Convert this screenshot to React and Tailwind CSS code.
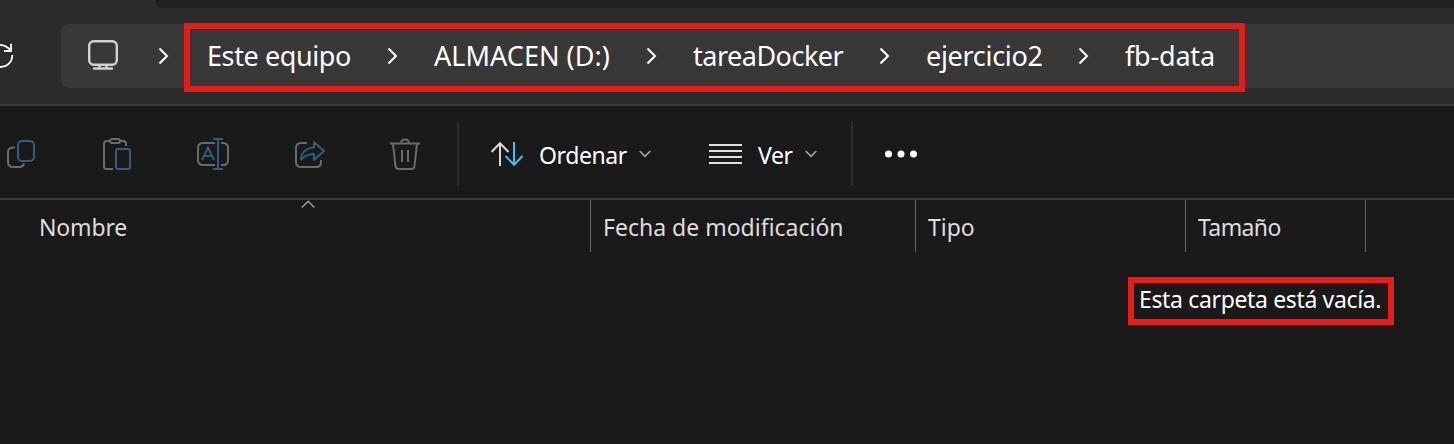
import React from "react";

const Svg = ({ w = 32, h = 32, className = "", sw = 2, stroke = "#6b6b6b", children }) => (
  <svg
    width={w}
    height={h}
    viewBox={`0 0 ${w} ${h}`}
    fill="none"
    stroke={stroke}
    strokeWidth={sw}
    className={`block shrink-0 ${className}`}
  >
    {children}
  </svg>
);

const BLUE = "#2f5f7d";

const Refresh = () => (
  <Svg w={14} h={28} stroke="#fff" sw={1.8} className="mt-[34px]">
    <path d="M0 2.800C4.500 3 8 5 10.800 8.600M11 1.800V9H4M12.200 13c.3 6.500-4.500 12-12.200 12" />
  </Svg>
);

const Monitor = () => (
  <Svg w={30} h={30} stroke="#d2d2d2" className="ml-[27px] mt-4">
    <rect x="1.200" y="1.200" width="27.600" height="23.600" rx="4.500" strokeWidth="2.400" />
    <path d="M6 28.500h18M11.500 25v3M18.500 25v3" strokeWidth="2.400" strokeLinecap="round" />
  </Svg>
);

const Chevron = () => (
  <Svg w={10} h={16} stroke="#fff" className="mt-6">
    <path d="M.5 .5 8 8 .5 15.500" />
  </Svg>
);

const Caret = () => (
  <Svg w={12} h={8} stroke="#a3a3a3" sw={1.7}>
    <path d="M.7 1 6 6.300 11.300 1" />
  </Svg>
);

const Copy = () => (
  <Svg>
    <path d="M10 9.500H8c-3 0-5 2-5 5V24c0 3 2 5 5 5h6c2.500 0 4.500-1.200 5-3.500" />
    <rect x="13" y="3" width="16" height="20" rx="4" stroke={BLUE} />
  </Svg>
);

const Paste = () => (
  <Svg>
    <path d="M8 3H5.500C4.400 3 3 4 3 5.500V28.500C3 30 4 31 5.500 31H12M20 3h2c1.500 0 3 1 3 2.500V8" />
    <rect x="9" y="1" width="10" height="4" rx="2" />
    <rect x="15" y="11" width="14" height="20" rx="2" stroke={BLUE} />
  </Svg>
);

const Rename = () => (
  <Svg>
    <path d="M18 5H6C3 5 1 7 1 10v12c0 3 2 5 5 5h12M24 5h2c3 0 5 2 5 5v12c0 3-2 5-5 5h-2" />
    <path d="M16 1h10M16 31h10M21 1v30M5 22 11 9.500 17 22M7 18h8" stroke={BLUE} />
  </Svg>
);

const Share = () => (
  <Svg>
    <path d="M14 5H8C5 5 3 7 3 10v14c0 3 2 5 5 5h15c3 0 5-2 5-5v-2" />
    <path
      d="M21 4v5.500C13 10 8 15 8 21.500c4-4 8-5.500 13-5.500v6l10-9z"
      stroke={BLUE}
      strokeLinejoin="round"
      strokeWidth="1.9"
    />
  </Svg>
);

const Trash = () => (
  <Svg>
    <path d="M1 5.500h30M12 5.500C12 2.800 13.500 1.500 16 1.500s4 1.300 4 4M4 6l2.500 22c.2 2 1.200 3 3 3h13c1.800 0 2.800-1 3-3L28 6M13 12v12M19 12v12" />
  </Svg>
);

const Sort = () => (
  <Svg stroke="#d8d8d8">
    <path d="M.5 14 9 5.200l8.500 8.800M9 5v23" />
    <path d="M23 4v23M14.500 18 23 26.800l8.500-8.800" stroke="#4cb8f5" />
  </Svg>
);

const List = () => (
  <Svg w={33} stroke="#e0e0e0">
    <path d="M0 7h33M0 13h33M0 19h33M0 25h33" />
  </Svg>
);

const crumbs = [
  { text: "Este equipo", style: "ml-[38px] w-[181px] tracking-[-0.4px]" },
  { text: "ALMACEN (D:)", style: "ml-9 w-[213px] tracking-[0.05px]" },
  { text: "tareaDocker", style: "ml-9 w-[187px] tracking-[-0.5px]" },
  { text: "ejercicio2", style: "ml-9 w-[153px] tracking-[-0.3px]" },
  { text: "fb-data", style: "ml-9 tracking-[-0.2px]" },
];

const columns = [
  { text: "Nombre", style: "w-[591px] pl-[39px] tracking-[-0.15px]" },
  { text: "Fecha de modificación", style: "w-[325px] pl-3" },
  { text: "Tipo", style: "w-[270px] pl-3" },
  { text: "Tamaño", style: "w-[180px] pl-3 tracking-[-0.6px]" },
];

export default function App() {
  return (
    <div className="relative flex h-[444px] w-[1454px] flex-col overflow-hidden bg-[#1a1a1a] font-['Noto_Sans',sans-serif] text-white">
      <header className="h-[106px] shrink-0 border-b-2 border-[#3c3c3c] bg-[#2c2c2c]">
        <div className="ml-[155px] h-2 rounded-bl-lg bg-[#202020]" />
        <div className="flex">
          <div className="w-[61px]">
            <Refresh />
          </div>
          <nav className="mt-4 flex h-16 flex-1 rounded-l-lg bg-[#383838]">
            <Monitor />
            <div className="w-[41px]" />
            <Chevron />
            {crumbs.map((c, i) => (
              <React.Fragment key={c.text}>
                <span className={`shrink-0 whitespace-nowrap text-[27px] leading-[64px] ${c.style}`}>{c.text}</span>
                {i < crumbs.length - 1 && <Chevron />}
              </React.Fragment>
            ))}
          </nav>
        </div>
      </header>

      <div className="flex h-[94px] shrink-0 items-center border-b-2 border-[#3c3c3c] pl-[5px] pt-1">
        <div className="flex gap-16">
          <Copy />
          <Paste />
          <Rename />
          <Share />
          <Trash />
        </div>
        <div className="ml-9 h-16 w-0.5 bg-[#2d2d2d]" />
        <button className="ml-8 flex items-center">
          <Sort />
          <span className="ml-4 w-[100px] pt-0.5 text-left text-[23px] tracking-[-0.4px]">Ordenar</span>
          <Caret />
        </button>
        <button className="ml-[58px] flex items-center">
          <List />
          <span className="ml-4 w-[47px] pt-0.5 text-left text-[23px] tracking-[-0.4px]">Ver</span>
          <Caret />
        </button>
        <div className="ml-[34px] h-16 w-0.5 bg-[#2d2d2d]" />
        <Svg w={34} className="ml-8">
          <g fill="#fff" stroke="none">
            <circle cx="3.500" cy="16" r="3.500" />
            <circle cx="16" cy="16" r="3.500" />
            <circle cx="28.500" cy="16" r="3.500" />
          </g>
        </Svg>
      </div>

      <div className="relative flex h-[52px] shrink-0">
        {columns.map((c) => (
          <div
            key={c.text}
            className={`shrink-0 whitespace-nowrap border-r border-[#656565] text-[23px] leading-[54px] text-[#dedede] ${c.style}`}
          >
            {c.text}
          </div>
        ))}
        <Svg w={14} h={8} stroke="#b0b0b0" sw={1.2} className="absolute left-[301px] top-0">
          <path d="M.8 7.500 7.200 1.300 13.400 7.500" />
        </Svg>
      </div>

      <main className="flex flex-1 justify-end pr-[60px] pt-[25px]">
        <div className="h-12 w-[266px] whitespace-nowrap border-[6px] border-[#e81b1b] pl-[5px] text-[23px] leading-[33px] tracking-[-0.35px]">
          Esta carpeta está vacía.
        </div>
      </main>

      <div className="absolute left-[184px] top-[23px] h-[69px] w-[1061px] border-[6px] border-[#e81b1b]" />
    </div>
  );
}
